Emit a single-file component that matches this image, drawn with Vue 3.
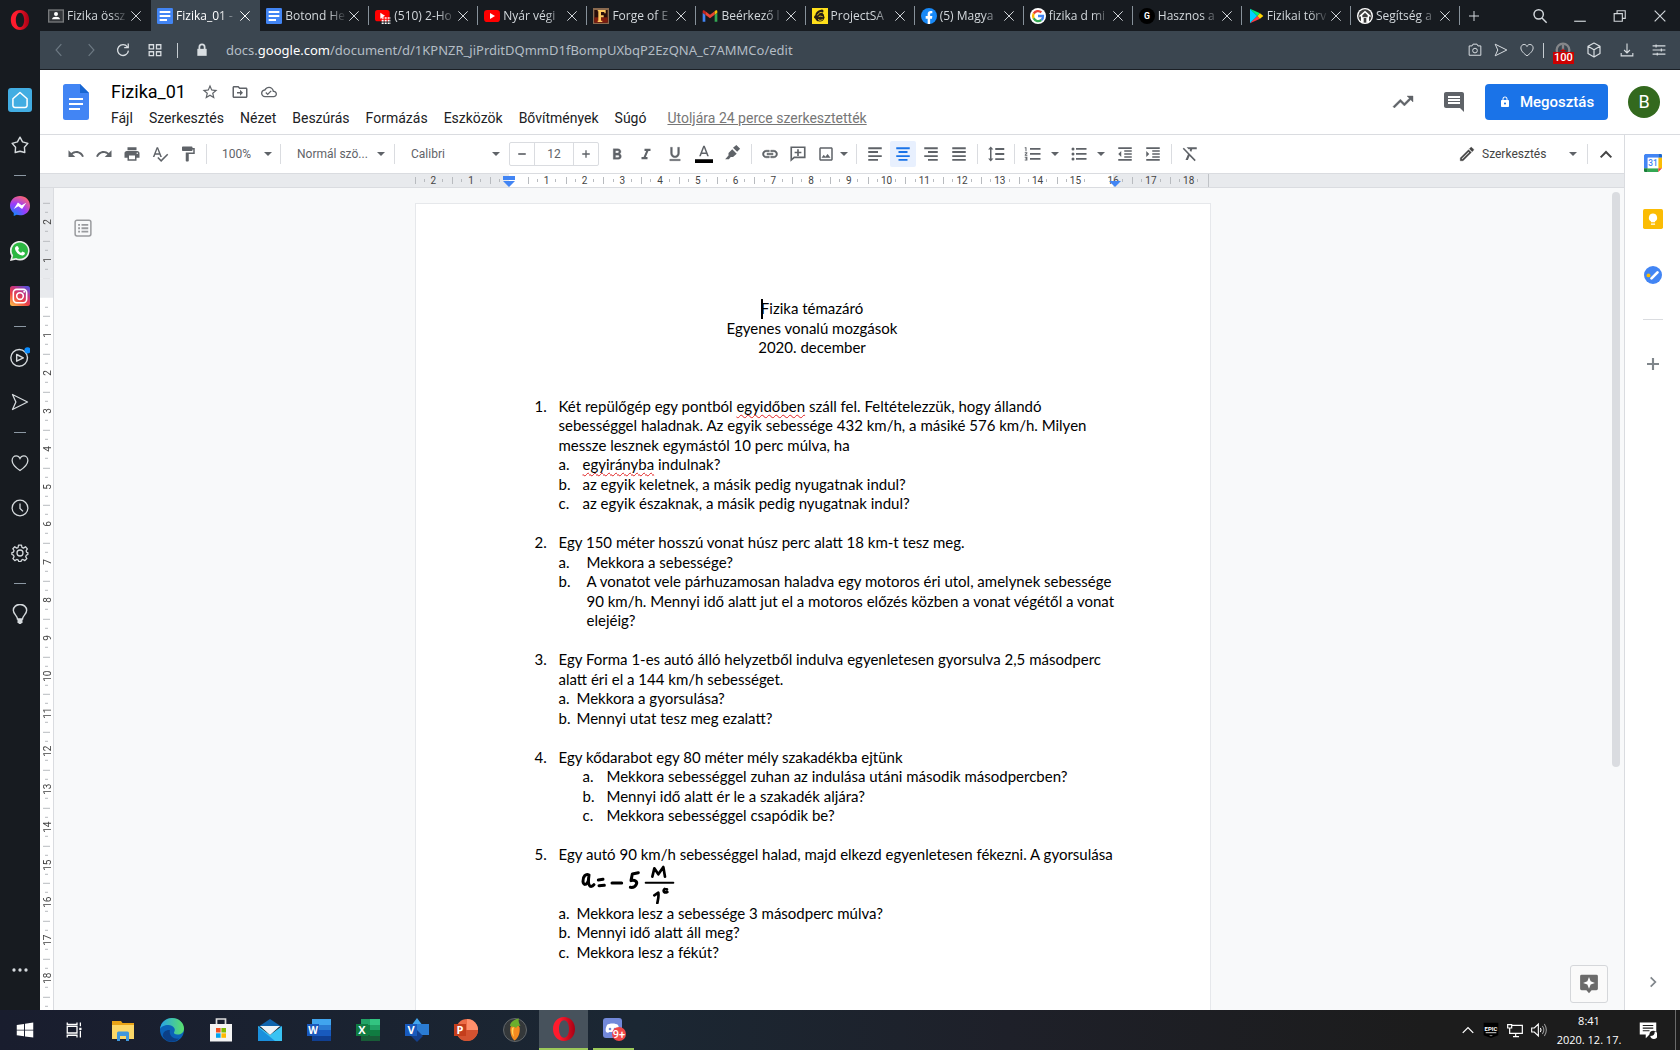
<script setup>
import { h, ref } from 'vue'

const glyphs = {
  // document toolbar
  undo: '<path d="M12.5 8c-2.65 0-5.05.99-6.9 2.6L2 7v9h9l-3.62-3.62c1.39-1.16 3.16-1.88 5.12-1.88 3.54 0 6.55 2.31 7.6 5.5l2.37-.78C21.08 11.03 17.15 8 12.5 8z"/>',
  redo: '<path d="M18.4 10.6C16.55 8.99 14.15 8 11.5 8c-4.65 0-8.58 3.03-9.96 7.22L3.9 16c1.05-3.19 4.05-5.5 7.6-5.5 1.95 0 3.73.72 5.12 1.88L13 16h9V7l-3.6 3.6z"/>',
  print: '<path d="M19 8H5c-1.66 0-3 1.34-3 3v6h4v4h12v-4h4v-6c0-1.66-1.34-3-3-3zm-3 11H8v-5h8v5zm3-7c-.55 0-1-.45-1-1s.45-1 1-1 1 .45 1 1-.45 1-1 1zm-1-9H6v4h12V3z"/>',
  spell: '<path d="M12.45 16h2.09L9.43 3H7.57L2.46 16h2.09l1.12-3h5.64l1.14 3zm-6.02-5L8.5 5.48 10.57 11H6.43zm15.16.59l-8.09 8.09L9.83 16l-1.41 1.41 5.09 5.09L23 13l-1.41-1.41z"/>',
  paint: '<path d="M18 4V3c0-.55-.45-1-1-1H5c-.55 0-1 .45-1 1v4c0 .55.45 1 1 1h12c.55 0 1-.45 1-1V6h1v4H9v11c0 .55.45 1 1 1h2c.55 0 1-.45 1-1v-9h8V4h-3z"/>',
  bold: '<path d="M15.6 11.79c.97-.67 1.65-1.77 1.65-2.79 0-2.26-1.75-4-4-4H7v14h7.04c2.09 0 3.71-1.7 3.71-3.79 0-1.52-.86-2.82-2.15-3.42zM10 7.5h3c.83 0 1.5.67 1.5 1.5s-.67 1.5-1.5 1.5h-3v-3zm3.5 9H10v-3h3.5c.83 0 1.5.67 1.5 1.5s-.67 1.5-1.5 1.5z" stroke="currentColor" stroke-width=".4"/>',
  italic: '<path d="M10 5v3h2.21l-3.42 8H6v3h8v-3h-2.21l3.42-8H18V5z"/>',
  underline: '<path d="M12 17c3.31 0 6-2.69 6-6V3h-2.5v8c0 1.93-1.57 3.5-3.5 3.5S8.5 12.93 8.5 11V3H6v8c0 3.31 2.69 6 6 6zm-7 2v2h14v-2H5z" stroke="currentColor" stroke-width=".4"/>',
  textColor: '<path d="M11 1L5.5 15h2.25l1.12-3h6.25l1.12 3h2.25L13 1h-2zm-1.38 9L12 3.67 14.38 10H9.62z"/><path fill="#000" d="M-2 19h28v5H-2z"/>',
  marker: '<path d="M16.500 0l5 5-4 4-5.500-5.500zM11 5.500l6 6-5 4.500H9l-2.500 3H1.500l4.500-5v-3.500z"/>',
  link: '<path d="M3.900 12c0-1.710 1.390-3.100 3.100-3.100h4V7H7c-2.760 0-5 2.240-5 5s2.240 5 5 5h4v-1.900H7c-1.710 0-3.100-1.390-3.100-3.100zM8 13h8v-2H8v2zm9-6h-4v1.900h4c1.710 0 3.100 1.390 3.100 3.100s-1.390 3.100-3.100 3.100h-4V17h4c2.760 0 5-2.240 5-5s-2.240-5-5-5z" stroke="currentColor" stroke-width=".7"/>',
  addComment: '<path fill="none" stroke="currentColor" stroke-width="2.200" d="M3 20V3h18v13.500H7zM12 5.500v9M7.500 10h9"/>',
  image: '<path d="M19 5v14H5V5h14m0-2H5c-1.1 0-2 .9-2 2v14c0 1.1.9 2 2 2h14c1.1 0 2-.9 2-2V5c0-1.1-.9-2-2-2zm-4.86 8.86l-3 3.870L9 13.140 6 17h12l-3.860-5.140z"/>',
  alignLeft: '<path d="M3 3h18v2.500H3zM3 8h13v2.500H3zM3 13.500h18V16H3zM3 18.500h13V21H3z"/>',
  alignCenter: '<path d="M3 3h18v2.500H3zM6 8h12v2.500H6zM3 13.500h18V16H3zM6 18.500h12V21H6z"/>',
  alignRight: '<path d="M3 3h18v2.500H3zM8 8h13v2.500H8zM3 13.500h18V16H3zM8 18.500h13V21H8z"/>',
  justify: '<path d="M3 3h18v2.500H3zM3 8h18v2.500H3zM3 13.500h18V16H3zM3 18.500h18V21H3z"/>',
  spacing: '<path d="M6 6h2.500L5 2 1.500 6H4v12H1.500L5 22l3.500-4H6V6zm5-2v2.500h12V4H11zm0 16h12v-2.500H11V20zm0-6.800h12v-2.500H11v2.500z"/>',
  numbered: '<path d="M1 17h2v.7H2v1h1v.7H1v1.200h3.500V15.800H1zM2 8.200h1.300V3H1v1.200h1zM1 11h2L1 13.100v1.100h3.500V13h-2l2-2.100V9.800H1zM8 4v2.300h14V4zM8 19.700h14v-2.300H8zM8 13h14v-2.300H8z"/>',
  bulleted: '<circle cx="4" cy="5.200" r="2"/><circle cx="4" cy="12" r="2"/><circle cx="4" cy="18.600" r="2"/><path d="M8 4v2.300h14V4zM8 19.700h14v-2.300H8zM8 13h14v-2.300H8z"/>',
  outdent: '<path d="M11 17h10v-2H11v2zm-8-5l4 4V8l-4 4zm0 9h18v-2.200H3V21zM3 3v2.200h18V3H3zm8 6h10V7H11v2zm0 4h10v-2H11v2z"/>',
  indent: '<path d="M3 21h18v-2.200H3V21zM3 8v8l4-4-4-4zm8 9h10v-2H11v2zM3 3v2.200h18V3H3zm8 6h10V7H11v2zm0 4h10v-2H11v2z"/>',
  clear: '<path d="M3.800 3.500L2.300 5l7 7.200L6 20h3.200l2.200-5.500 6.800 7 1.500-1.500zM7.500 3l2.600 2.700h2.100l-.6 1.500 2 2 1.400-3.500H21V3z"/>',
  pencil: '<path d="M14.060 9.020l.92.92L5.920 19H5v-.92l9.060-9.060M17.660 3c-.25 0-.51.1-.7.290l-1.830 1.830 3.750 3.750 1.830-1.830c.39-.39.39-1.020 0-1.410l-2.340-2.340c-.2-.2-.45-.29-.71-.29zm-3.600 3.190L3 17.250V21h3.750L17.810 9.940l-3.750-3.750z" stroke="currentColor" stroke-width=".5"/>',
  chevronUp: '<path fill="none" stroke="currentColor" stroke-width="3" d="M4 17l8-8 8 8"/>',
  chevronRight: '<path fill="none" stroke="currentColor" stroke-width="3" d="M8 4l8 8-8 8"/>',
  minus: '<path d="M3 10h18v4H3z"/>',
  plus: '<path d="M3 10.400h7.400V3h3.200v7.400H21v3.200h-7.400V21h-3.200v-7.400H3z"/>',
  // document header
  star: '<path d="M22 9.240l-7.190-.62L12 2 9.190 8.630 2 9.240l5.460 4.730L5.820 21 12 17.270 18.180 21l-1.630-7.030L22 9.240zM12 15.400l-3.760 2.270 1-4.280-3.320-2.880 4.380-.38L12 6.100l1.710 4.040 4.380.38-3.320 2.880 1 4.280L12 15.400z"/>',
  folder: '<path d="M20 6h-8l-2-2H4c-1.100 0-2 .9-2 2v12c0 1.100.9 2 2 2h16c1.100 0 2-.9 2-2V8c0-1.100-.9-2-2-2zm0 12H4V6h5.170l2 2H20v10zm-8-1l4-4-4-4v3H8v2h4v3z"/>',
  cloud: '<path d="M19.350 10.040C18.670 6.590 15.640 4 12 4 9.110 4 6.600 5.640 5.350 8.040 2.340 8.360 0 10.910 0 14c0 3.310 2.690 6 6 6h13c2.760 0 5-2.240 5-5 0-2.640-2.050-4.780-4.650-4.960zM19 18H6c-2.210 0-4-1.790-4-4 0-2.050 1.530-3.760 3.560-3.970l1.070-.11.5-.95C8.080 7.140 9.940 6 12 6c2.620 0 4.880 1.860 5.390 4.430l.3 1.500 1.530.11c1.560.1 2.780 1.410 2.780 2.960 0 1.650-1.350 3-3 3zm-9-3.820l-2.090-2.090L6.500 13.500 10 17l6.010-6.010-1.410-1.410z"/>',
  trend: '<path d="M16 6l2.290 2.290-4.880 4.880-4-4L2 16.590 3.410 18l6-6 4 4 6.300-6.290L22 12V6z" stroke="currentColor" stroke-width=".4"/>',
  comments: '<path d="M22 4c0-1.100-.9-2-2-2H4c-1.100 0-2 .9-2 2v12c0 1.100.9 2 2 2h14l4 4zM18 14H6v-2h12v2zm0-3H6V9h12v2zm0-3H6V6h12v2z"/>',
  lock: '<path d="M18 8h-1V6c0-2.760-2.240-5-5-5S7 3.240 7 6v2H6c-1.100 0-2 .9-2 2v10c0 1.100.9 2 2 2h12c1.100 0 2-.9 2-2V10c0-1.100-.9-2-2-2zm-6 9c-1.100 0-2-.9-2-2s.9-2 2-2 2 .9 2 2-.9 2-2 2zm3.100-9H8.900V6c0-1.710 1.390-3.100 3.100-3.100 1.710 0 3.100 1.390 3.100 3.100v2z"/>',
  outline: '<path fill="none" stroke="currentColor" stroke-width="2" d="M4 1.500h16A2.500 2.500 0 0 1 22.500 4v16a2.500 2.500 0 0 1-2.500 2.500H4A2.500 2.500 0 0 1 1.500 20V4A2.500 2.500 0 0 1 4 1.500z"/><path d="M5.500 6.500h2.500V9H5.500zM10 6.500h9V9h-9zM5.500 11h2.500v2.500H5.500zM10 11h9v2.500h-9zM5.500 15.500h2.500V18H5.500zM10 15.500h9V18h-9z"/>',
  explore: '<path d="M2 1h20a2 2 0 0 1 2 2v17a2 2 0 0 1-2 2h-6.500L12 26l-3.500-4H2a2 2 0 0 1-2-2V3a2 2 0 0 1 2-2z"/><path fill="#fff" d="M12 4l2.200 5.800L20 12l-5.800 2.200L12 20l-2.200-5.800L4 12l5.800-2.200z"/>',
  // browser chrome
  close: '<path fill="none" stroke="currentColor" stroke-width="1.700" d="M4 4l16 16M20 4L4 20"/>',
  add: '<path fill="none" stroke="currentColor" stroke-width="2" d="M12 2v20M2 12h20"/>',
  search: '<g fill="none" stroke="currentColor" stroke-width="2.200"><circle cx="10" cy="9.500" r="7"/><path d="M15 15l7 7"/></g>',
  minimize: '<path fill="none" stroke="currentColor" stroke-width="2" d="M2 21h20"/>',
  restore: '<path fill="none" stroke="currentColor" stroke-width="1.900" d="M2 8h14v13H2zM7 8V3h14v13h-5"/>',
  back: '<path fill="none" stroke="currentColor" stroke-width="2" d="M16 2L7 12l9 10"/>',
  forward: '<path fill="none" stroke="currentColor" stroke-width="2" d="M8 2l9 10-9 10"/>',
  reload: '<path fill="none" stroke="currentColor" stroke-width="2.200" d="M19.500 6.500A9.300 9.300 0 1 0 21.300 13M21 1v7h-7"/>',
  speedDial: '<path fill="none" stroke="currentColor" stroke-width="2.200" d="M2 3h7.500v7H2zM14.500 3H22v7h-7.500zM2 15h7.500v6.500H2zM14.500 15H22v6.500h-7.500z"/>',
  siteLock: '<path d="M4 10h16v12H4z"/><path fill="none" stroke="currentColor" stroke-width="3" d="M7.500 11V7a4.500 4.500 0 0 1 9 0v4"/>',
  camera: '<g fill="none" stroke="currentColor" stroke-width="1.700"><path d="M2 5h5l1.500-3h7L17 5h5v16H2z"/><circle cx="12" cy="13" r="4"/></g>',
  send: '<path fill="none" stroke="currentColor" stroke-width="1.700" stroke-linejoin="round" d="M2 2l20 10L2 22l4.500-10z"/>',
  heart: '<path fill="none" stroke="currentColor" stroke-width="1.700" d="M12 22C7 18.500 1.500 13.500 1.500 8.500 1.500 5 4 2.500 7 2.500c2.200 0 4 1.200 5 3.500 1-2.300 2.800-3.500 5-3.500 3 0 5.500 2.500 5.500 6 0 5-5.500 10-10.500 13.500z"/>',
  blocker: '<g fill="none" stroke="#85878a" stroke-width="3.500"><circle cx="12" cy="12" r="9.500"/><path d="M12 4v10"/></g><path stroke="#c60000" stroke-width="2" d="M8 13h8M12 10v6"/>',
  cube: '<path fill="none" stroke="currentColor" stroke-width="1.800" stroke-linejoin="round" d="M12 1.500l9 4.800v11L12 22.500l-9-5.200v-11zM3 6.500l9 5 9-5M12 11.500v11"/>',
  download: '<path fill="none" stroke="currentColor" stroke-width="1.900" d="M12 1v16M7 12l5 5 5-5M2 17v5h20v-5"/>',
  sliders: '<path fill="none" stroke="currentColor" stroke-width="1.900" d="M1 5h22M1 12h22M1 19h22M7 2.500v5M16 9.500v5M9 16.500v5"/>',
  home: '<path fill="none" stroke="currentColor" stroke-width="1.800" stroke-linejoin="round" d="M12 3l8.500 7.500v8A2.500 2.500 0 0 1 18 21H6a2.500 2.500 0 0 1-2.500-2.500v-8z"/>',
  pinStar: '<path fill="none" stroke="currentColor" stroke-width="1.900" stroke-linejoin="round" d="M12 1.500l3.400 6.300 7.100 2-4.600 5.200.5 7-6.400-1.700L5.600 22l.5-7L1.500 9.800l7.100-2z"/>',
  player: '<g fill="none" stroke="currentColor" stroke-width="1.700" stroke-linejoin="round"><circle cx="11" cy="13" r="10"/><path d="M8 9l8 4-8 4z"/></g><circle cx="21" cy="4" r="3.700" fill="#0a8dff"/>',
  clock: '<g fill="none" stroke="currentColor" stroke-width="1.700"><circle cx="12" cy="12" r="10.500"/><path d="M12 6v6.500l4 4"/></g>',
  gear: '<g fill="none" stroke="currentColor" stroke-width="1.700" stroke-linejoin="round"><path d="M10 1.500h4l.6 3.100 2 .9 2.700-1.800 2.500 2.800-1.700 2.600.8 2 1.600.4v2.500l-2 .8-.9 2.200 1.500 2.500-2.600 2.600-2.600-1.500-1.900.8-.7 2.100h-2.900l-.7-2.100-2-.8-2.600 1.500-2.500-2.600 1.500-2.500-.9-2.200-2-.8v-2.500l2-.6.8-2L2.500 6.300 5 3.700l2.700 1.800 1.800-.9z"/><circle cx="12" cy="12" r="4"/></g>',
  bulb: '<path fill="none" stroke="currentColor" stroke-width="1.700" d="M9 18c0-4-5-5.500-5-10.500a8 7 0 0 1 16 0C20 12.500 15 14 15 18z"/><path d="M9 18h6v4l-2 2h-2l-2-2z"/>',
  dots: '<circle cx="3" cy="12" r="2.500"/><circle cx="12" cy="12" r="2.500"/><circle cx="21" cy="12" r="2.500"/>',
  opera: '<defs><linearGradient id="operaRing"><stop offset=".3" stop-color="#ff1b2d"/><stop offset="1" stop-color="#a70014"/></linearGradient></defs><path fill="url(#operaRing)" fill-rule="evenodd" d="M12 0c6.500 0 11 5.200 11 12s-4.500 12-11 12S1 18.800 1 12 5.500 0 12 0zm0 3.300c-3 0-5 3.900-5 8.700s2 8.700 5 8.700 5-3.900 5-8.700-2-8.700-5-8.700z"/>',
  messenger: '<defs><radialGradient id="msgFill" cx=".2" cy="1" r="1.100"><stop offset="0" stop-color="#0a8dff"/><stop offset=".55" stop-color="#9a3bfc"/><stop offset="1" stop-color="#ff6670"/></radialGradient></defs><path fill="url(#msgFill)" d="M12 0c6.700 0 12 5 12 11.600s-5.300 11.600-12 11.600c-1.500 0-2.700-.2-4-.6L4.500 24v-3.600A11.500 11.500 0 0 1 0 11.600C0 5 5.300 0 12 0z"/><path fill="#fff" d="M4.500 15.500l5-7.700 4.500 3.400 5.500-3.200-5 7.700-4.500-3.400z"/>',
  whatsapp: '<path fill="#eee" d="M0 24l1.700-6A11.800 11.800 0 1 1 7 22.500z"/><path fill="#2cb742" d="M2.800 21.200l1-4a9.800 9.800 0 1 1 3.600 3.100z"/><path fill="#fff" d="M7.500 6.200h2l1.300 3-1 1.500c.8 1.700 2 2.800 3.700 3.500l1.400-1.500 3 1.400c.2 2-1.500 3.300-3.200 3.300-4.200-.4-8.300-4.600-8.700-8.500 0-1.200.6-2.200 1.500-2.700z"/>',
  instagram: '<defs><linearGradient id="igFill" x1=".1" y1="1" x2=".8" y2="0"><stop offset="0" stop-color="#fdb94a"/><stop offset=".4" stop-color="#ee4444"/><stop offset=".7" stop-color="#c13584"/><stop offset="1" stop-color="#5b51d8"/></linearGradient></defs><rect width="24" height="24" rx="3" fill="url(#igFill)"/><g fill="none" stroke="#fff" stroke-width="1.900"><rect x="4" y="4" width="16" height="16" rx="4"/><circle cx="12" cy="12" r="4"/></g><circle cx="17" cy="7" r="1.200" fill="#fff"/>',
  // tab favicons
  classroom: '<path fill="#77797b" d="M0 2h24v20H0z"/><path fill="#33363a" d="M2 4h20v16H2z"/><circle cx="12" cy="9" r="3" fill="#fff"/><path fill="#fff" d="M6 17c0-3 3-4 6-4s6 1 6 4z"/>',
  docsTab: '<rect width="24" height="24" rx="2" fill="#4285f4"/><path fill="#fff" d="M4 4.500h16v3H4zM4 10.500h16v3H4zM4 16.500h11v3H4z"/>',
  ytPlaying: '<rect y="3" width="22" height="17" rx="4" fill="#f00"/><path fill="#fff" d="M8 7l7 4.500L8 16z"/><path stroke="#fff" stroke-width="2.500" stroke-dasharray="3 1.500" d="M10 15h14M10 19h14M10 23h14"/>',
  youtube: '<rect x="0" y="3" width="24" height="18" rx="5" fill="#f00"/><path fill="#fff" d="M9 7.500l7.500 4.500L9 16.500z"/>',
  forge: '<path fill="#8a6a4f" d="M0 0h24v24H0z"/><path fill="#2a0d0a" d="M2 3h20v19H2z"/><path fill="#801c0e" d="M2 14h20v8H2z"/><path fill="#ffc860" d="M7 3h12v5h-2V6h-5v5h4v3h-4v5h2v2H7v-2h1V5H7z"/>',
  gmail: '<path fill="#4285f4" d="M1 20.500h4V10L1 7z"/><path fill="#34a853" d="M19 20.500h4V7l-4 3z"/><path fill="#ea4335" d="M5 10V5l7 5 7-5v5l-7 5.500z"/><path fill="#c5221f" d="M1 7V5c0-2 2-2.500 4 0v5z"/><path fill="#fbbc04" d="M23 7V5c0-2-2-2.500-4 0v5z"/>',
  mailchimp: '<path fill="#ffe01b" d="M0 0h24v24H0z"/><path fill="#241c15" d="M12 3c4-2 6 0 5 3l-1 2c3 2 1 4 3 6-1 5-5 7-9 6-3 0-4-2-5-4-3-1-2-4 0-5 0-4 3-7 7-8z"/><path fill="none" stroke="#ffe01b" stroke-width="1.300" d="M8 11c2-4 5-5 8-4M10 13c3-2 4 0 6 0M9 17c2 2 4 2 7 0"/>',
  facebook: '<circle cx="12" cy="12" r="12" fill="#1889f7"/><path fill="#fff" d="M10 24v-8H7v-4h3V9c0-3 2-4.600 4.500-4.600l2.500.2v3.300h-1.500c-1.300 0-1.800.7-1.800 1.600V12H17l-.5 4h-2.800v8z"/>',
  google: '<circle cx="12" cy="12" r="12" fill="#fff"/><g fill="none" stroke-width="3.500"><path stroke="#ea4335" d="M17 6.500A7.500 7.500 0 0 0 5.500 8.500"/><path stroke="#fbbc04" d="M5.500 8.500a7.500 7.500 0 0 0 0 7"/><path stroke="#34a853" d="M5.500 15.500A7.500 7.500 0 0 0 17 18"/><path stroke="#4285f4" d="M17 18c2-1.600 2.800-3.500 2.500-6H12"/></g>',
  letterG: '<circle cx="12" cy="12" r="12" fill="#000"/><text x="12" y="16.500" text-anchor="middle" font-family="Roboto, sans-serif" font-weight="700" font-size="13" fill="#fff">G</text>',
  play: '<path fill="#00d0ff" d="M3 1v22l11-11z"/><path fill="#00f076" d="M3 1l11 11 4-4z"/><path fill="#ff3a44" d="M3 23l11-11 4 4z"/><path fill="#ffd500" d="M14 12l4-4 5 4-5 4z"/>',
  house: '<circle cx="12" cy="12" r="12" fill="#fff"/><circle cx="12" cy="12" r="10" fill="#3d3d3d"/><path fill="#fff" d="M12 4l9 8-1.500 1.500L18 12v10h-4v-7h-4v7H6V12l-1.500 1.500L3 12z"/><path fill="#3d3d3d" d="M12 7l4 4v3H8v-3z"/>',
  // side panel
  calendar: '<path fill="#4285f4" d="M1.500 0H19v5H5v14H0V1.500z"/><path fill="#1967d2" d="M19 0h3.500A1.500 1.500 0 0 1 24 1.500V5h-5z"/><path fill="#fbbc04" d="M19 5h5v14h-5z"/><path fill="#34a853" d="M5 19h14v5H5z"/><path fill="#188038" d="M0 19h5v5H1.500A1.500 1.500 0 0 1 0 22.500z"/><path fill="#ea4335" d="M19 19h5l-5 5z"/><path fill="#fff" d="M5 5h14v14H5z"/><text x="12" y="16" text-anchor="middle" font-family="Roboto, sans-serif" font-weight="500" font-size="11" fill="#4285f4">31</text>',
  keep: '<rect width="24" height="24" rx="2" fill="#fbbc04"/><path fill="#fff" d="M12 5.500a5 5 0 0 1 2.500 9.300V16h-5v-1.200A5 5 0 0 1 12 5.500zM9.500 17.300h5v1.700h-5z"/>',
  tasks: '<circle cx="12" cy="12" r="12" fill="#4285f4"/><path stroke="#fff" stroke-width="3.600" stroke-linecap="round" d="M10 16.500l8-8"/><circle cx="6" cy="12.500" r="2.600" fill="#fbbc04"/>',
  // taskbar
  windows: '<path d="M1 5.200l9.700-1.300v7.600H1zM12 3.700L23 2v9.500H12zM1 12.700h9.700v7.600L1 19zM12 12.700h11V22l-11-1.500z"/>',
  taskView: '<path fill="none" stroke="currentColor" stroke-width="1.700" d="M3 7h13v9H3zM3 2v2.500h13V2M3 22v-3h13v3M20.500 2v5M20.500 13v9"/><path d="M19 9h3v3h-3z"/>',
  explorer: '<path fill="#e8a317" d="M1 3h9l1.500 2H23v4H1z"/><path fill="#fbd768" d="M1 7h22v14H1z"/><path fill="#3f97dc" d="M6 23v-8a1.500 1.500 0 0 1 1.500-1.500h9A1.500 1.500 0 0 1 18 15v8h-3v-5H9v5z"/>',
  edge: '<defs><linearGradient id="edgeTop"><stop offset="0" stop-color="#27a3e8"/><stop offset="1" stop-color="#5be06a"/></linearGradient></defs><circle cx="12" cy="12" r="12" fill="#0b62b8"/><path fill="url(#edgeTop)" d="M0 11C1 4 6 0 12 0c7 0 12 5 12 10.500 0 4-3 6-6.500 6-3 0-3.800-1.200-3.500-2.300C16.500 11 13 7 8.500 7 4 7 1 9 0 11z"/><path fill="#0c3f86" d="M10 12c-1.500 5 3 9.500 9 8.500-5 5-13 4-16-2-1-4 3-7 7-6.500z"/>',
  store: '<path fill="none" stroke="#ddd" stroke-width="1.700" d="M7.500 8V1h9v7"/><path fill="#f4f4f4" d="M1 6h22v17.500H1z"/><path fill="#f25022" d="M7 10h4.600v4.500H7z"/><path fill="#7fba00" d="M12.400 10H17v4.500h-4.600z"/><path fill="#00a4ef" d="M7 15.300h4.600v4.500H7z"/><path fill="#ffb900" d="M12.400 15.300H17v4.500h-4.600z"/>',
  mail: '<path fill="#0f64ad" d="M0 9l12-8 12 8z"/><path fill="#39c3f3" d="M0 8v15h24V8l-12 9z"/><path fill="#eef3f7" d="M2 8h20l-10 9z"/><path fill="#1a90dd" d="M0 23V9l17 14z"/>',
  word: '<path fill="#41a5ee" d="M5 1h19v6H5z"/><path fill="#2b7cd3" d="M5 7h19v5H5z"/><path fill="#185abd" d="M5 12h19v6H5z"/><path fill="#103f91" d="M5 18h19v5H5z"/><path fill="#1a58bb" d="M0 6h12v12H0z"/><text x="6" y="16" text-anchor="middle" font-family="Open Sans, sans-serif" font-weight="700" font-size="10" fill="#fff">W</text>',
  excel: '<path fill="#21a366" d="M5 1h19v22H5z"/><path fill="#33c481" d="M14 1h10v6H14z"/><path fill="#185c37" d="M5 17h19v6H5z"/><path fill="#107c41" d="M5 7h9v10H5zM14 12h10v6H14zM0 6h12v12H0z"/><text x="6" y="16" text-anchor="middle" font-family="Open Sans, sans-serif" font-weight="700" font-size="11" fill="#fff">X</text>',
  visio: '<path fill="#41a5ee" d="M12 0l6 8-6 6-6-6z"/><path fill="#2b7cd3" d="M12 6h12v11H12z"/><path fill="#133f8c" d="M12 12l6 6-6 6-6-6z"/><path fill="#185abd" d="M0 6h12v12H0z"/><text x="6" y="16" text-anchor="middle" font-family="Open Sans, sans-serif" font-weight="700" font-size="11" fill="#fff">V</text>',
  powerpoint: '<circle cx="13" cy="12" r="11" fill="#ed6c47"/><path fill="#ff8f6b" d="M13 1a11 11 0 0 1 11 11H13z"/><path fill="#d35230" d="M2 12h22a11 11 0 0 1-22 0z"/><path fill="#c43e1c" d="M0 6h12v12H0z"/><text x="6" y="16" text-anchor="middle" font-family="Open Sans, sans-serif" font-weight="700" font-size="11" fill="#fff">P</text>',
  fruity: '<circle cx="12" cy="12" r="11.500" fill="#34383a" stroke="#62676b"/><path fill="#f58a1f" d="M7.500 9c2-3 7-3 9 0 1 5-1 11-5 13.500-3-2-5-8.500-4-13.500z"/><path fill="#ffd25a" d="M9 10c-1 3 0 7 2 9-1-4-1-6 0-10z"/><path fill="#6cae2c" d="M7 8c0-4 5-7 9-7.500-1 2 0 5 1.500 7.500-3-1-3.500 1-4.500 2-2-2-4-1-6-2z"/>',
  discord: '<rect x="1" y="1" width="19" height="20" rx="3" fill="#7289da"/><path fill="#fff" d="M5 8c2-2 9-2 11 0 1 2 2 5 1 7-1 1-3 1-3 0h-7c0 1-2 1-3 0-1-2 0-5 1-7z"/><circle cx="8" cy="12" r="1.300" fill="#7289da"/><circle cx="13" cy="12" r="1.300" fill="#7289da"/><circle cx="17" cy="17" r="7" fill="#f04747"/><text x="17" y="21" text-anchor="middle" font-family="Roboto, sans-serif" font-weight="500" font-size="11" fill="#fff">9+</text>',
  trayUp: '<path fill="none" stroke="currentColor" stroke-width="2.200" d="M3 17l9-9 9 9"/>',
  epic: '<path fill="#000" d="M1 1h22v19l-11 4-11-4z"/><text x="12" y="13" text-anchor="middle" font-family="Roboto, sans-serif" font-weight="700" font-size="9" fill="#fff">EPIC</text><path fill="#aaa" d="M4 15h16v2H4zM9 20h6l-3 1.500z"/>',
  network: '<path fill="none" stroke="currentColor" stroke-width="1.800" d="M7 5h16v12H4V10M13 17v5M9 22h9M1 4h6v5H1zM4 9v3"/>',
  volume: '<path fill="none" stroke="currentColor" stroke-width="1.700" d="M1 9h4l6-6v18l-6-6H1zM14 9c1.500 2 1.500 4 0 6"/><path fill="none" stroke="#999" stroke-width="1.600" d="M17 6c3 4 3 8 0 12M20 3c4 6 4 12 0 18"/>',
  notice: '<path fill="currentColor" d="M1 2h22v16h-9l-5 5v-5H1z"/><path stroke="#1d1d1d" stroke-width="1.500" d="M5 6h14M5 9.500h14M5 13h9"/><circle cx="19" cy="18" r="5" fill="#1d1d1d"/><path fill="currentColor" d="M21 14a5 5 0 1 1-6 6c4 0 6-2 6-6z"/>',
}

const Icon = (props) =>
  h('svg', {
    viewBox: props.box || '0 0 24 24',
    width: props.size || 18,
    height: props.tall || props.size || 18,
    fill: 'currentColor',
    'aria-hidden': 'true',
    innerHTML: glyphs[props.name],
  })
Icon.props = ['name', 'size', 'tall', 'box']

const tabs = [
  { icon: 'classroom', title: 'Fizika össz' },
  { icon: 'docsTab', title: 'Fizika_01 -', active: true },
  { icon: 'docsTab', title: 'Botond He' },
  { icon: 'ytPlaying', title: '(510) 2-Ho' },
  { icon: 'youtube', title: 'Nyár végi' },
  { icon: 'forge', title: 'Forge of E' },
  { icon: 'gmail', title: 'Beérkező l' },
  { icon: 'mailchimp', title: 'ProjectSA' },
  { icon: 'facebook', title: '(5) Magya' },
  { icon: 'google', title: 'fizika d mi' },
  { icon: 'letterG', title: 'Hasznos a' },
  { icon: 'play', title: 'Fizikai törv' },
  { icon: 'house', title: 'Segítség a' },
]

const rail = [
  { icon: 'pinStar' }, null,
  { icon: 'messenger', size: 20 }, { icon: 'whatsapp', size: 20 }, { icon: 'instagram', size: 20 }, null,
  { icon: 'player', size: 20 }, { icon: 'send' }, null,
  { icon: 'heart' }, { icon: 'clock' }, { icon: 'gear' }, null,
  { icon: 'bulb', size: 20 },
]

const menus = ['Fájl', 'Szerkesztés', 'Nézet', 'Beszúrás', 'Formázás', 'Eszközök', 'Bővítmények', 'Súgó']
const fontSize = ref('12')
const title = ref('Fizika_01')

const rulerMarks = Array.from({ length: 21 }, (_, i) => Math.abs(i - 2) || '')
const sideMarks = Array.from({ length: 22 }, (_, i) => Math.abs(i - 2) || '')

const questions = [
  {
    lines: [
      ['Két repülőgép egy pontból ', { bad: 'egyidőben' }, ' száll fel. Feltételezzük, hogy állandó'],
      ['sebességgel haladnak. Az egyik sebessége 432 km/h, a másiké 576 km/h. Milyen'],
      ['messze lesznek egymástól 10 perc múlva, ha'],
    ],
    kind: 'normal',
    subs: [
      [[{ bad: 'egyirányba' }, ' indulnak?']],
      [['az egyik keletnek, a másik pedig nyugatnak indul?']],
      [['az egyik északnak, a másik pedig nyugatnak indul?']],
    ],
  },
  {
    lines: [['Egy 150 méter hosszú vonat húsz perc alatt 18 km-t tesz meg.']],
    kind: 'wide',
    subs: [
      [['Mekkora a sebessége?']],
      [
        ['A vonatot vele párhuzamosan haladva egy motoros éri utol, amelynek sebessége'],
        ['90 km/h. Mennyi idő alatt jut el a motoros előzés közben a vonat végétől a vonat'],
        ['elejéig?'],
      ],
    ],
  },
  {
    lines: [
      ['Egy Forma 1-es autó álló helyzetből indulva egyenletesen gyorsulva 2,5 másodperc'],
      ['alatt éri el a 144 km/h sebességet.'],
    ],
    kind: 'tight',
    subs: [[['Mekkora a gyorsulása?']], [['Mennyi utat tesz meg ezalatt?']]],
  },
  {
    lines: [['Egy kődarabot egy 80 méter mély szakadékba ejtünk']],
    kind: 'inset',
    subs: [
      [['Mekkora sebességgel zuhan az indulása utáni második másodpercben?']],
      [['Mennyi idő alatt ér le a szakadék aljára?']],
      [['Mekkora sebességgel csapódik be?']],
    ],
  },
  {
    lines: [['Egy autó 90 km/h sebességgel halad, majd elkezd egyenletesen fékezni. A gyorsulása']],
    formula: true,
    kind: 'tight',
    subs: [[['Mekkora lesz a sebessége 3 másodperc múlva?']], [['Mennyi idő alatt áll meg?']], [['Mekkora lesz a fékút?']]],
  },
]

const apps = ['windows', 'taskView', 'explorer', 'edge', 'store', 'mail', 'word', 'excel', 'visio', 'powerpoint', 'fruity', 'opera', 'discord']
</script>

<template>
  <div class="desktop">
    <div class="window">
      <nav class="rail" aria-label="Oldalsáv">
        <button class="rail-logo" aria-label="Opera"><Icon name="opera" :size="20" /></button>
        <button class="rail-home" aria-label="Kezdőlap"><Icon name="home" :size="20" /></button>
        <template v-for="(item, i) in rail" :key="i">
          <button v-if="item" class="rail-item" :aria-label="item.icon"><Icon :name="item.icon" :size="item.size" /></button>
          <span v-else class="rail-dash"></span>
        </template>
        <button class="rail-more" aria-label="Továbbiak"><Icon name="dots" :size="16" /></button>
      </nav>

      <div class="browser">
        <header class="tab-bar">
          <div class="tabs">
            <div v-for="(tab, i) in tabs" :key="i" class="tab" :class="{ active: tab.active }">
              <Icon :name="tab.icon" :size="16" />
              <button class="tab-title">{{ tab.title }}</button>
              <button class="tab-close" aria-label="Bezárás"><Icon name="close" :size="14" /></button>
            </div>
          </div>
          <button class="new-tab" aria-label="Új lap"><Icon name="add" :size="12" /></button>
          <div class="window-buttons">
            <button aria-label="Keresés"><Icon name="search" :size="16" /></button>
            <button aria-label="Kis méret"><Icon name="minimize" :size="14" /></button>
            <button aria-label="Előző méret"><Icon name="restore" :size="14" /></button>
            <button aria-label="Ablak bezárása"><Icon name="close" :size="16" /></button>
          </div>
        </header>

        <div class="address-bar">
          <button class="dim" aria-label="Vissza"><Icon name="back" :size="14" /></button>
          <button class="dim" aria-label="Előre"><Icon name="forward" :size="14" /></button>
          <button aria-label="Frissítés"><Icon name="reload" :size="14" /></button>
          <button aria-label="Gyorstárcsázó"><Icon name="speedDial" :size="14" /></button>
          <span class="bar-line"></span>
          <Icon class="site-lock" name="siteLock" :size="14" />
          <div class="url">docs.<b>google.com</b>/document/d/1KPNZR_jiPrditDQmmD1fBompUXbqP2EzQNA_c7AMMCo/edit</div>
          <div class="bar-tools">
            <button aria-label="Képernyőkép"><Icon name="camera" :size="14" /></button>
            <button aria-label="Küldés"><Icon name="send" :size="14" /></button>
            <button aria-label="Könyvjelző"><Icon name="heart" :size="14" /></button>
          </div>
          <span class="bar-line"></span>
          <div class="bar-extras">
            <button class="blocker" aria-label="Blokkoló"><Icon name="blocker" :size="16" /><span class="badge">100</span></button>
            <button aria-label="Bővítmények"><Icon name="cube" :size="16" /></button>
            <button aria-label="Letöltések"><Icon name="download" :size="14" /></button>
            <button aria-label="Beállítás"><Icon name="sliders" :size="14" /></button>
          </div>
        </div>

        <header class="doc-header">
          <a class="doc-logo" href="#" aria-label="Dokumentumok">
            <svg viewBox="0 0 26 36" width="26" height="36" aria-hidden="true">
              <path fill="#4285f4" d="M2.500 0H17l9 9v24.500a2.500 2.500 0 0 1-2.500 2.500h-21A2.500 2.500 0 0 1 0 33.500v-31A2.500 2.500 0 0 1 2.500 0z" />
              <path fill="#1967d2" d="M17 0l9 9h-9z" />
              <path fill="#fff" d="M6 14h14v2H6zM6 19h14v2H6zM6 24h11v2H6z" />
            </svg>
          </a>
          <div class="doc-head-main">
            <div class="title-row">
              <input v-model="title" class="doc-title" aria-label="Dokumentum címe" />
              <button aria-label="Csillagozás"><Icon name="star" :size="18" /></button>
              <button aria-label="Áthelyezés"><Icon name="folder" :size="18" /></button>
              <button aria-label="Mentés állapota"><Icon name="cloud" :size="16" /></button>
            </div>
            <div class="menu-row">
              <button v-for="m in menus" :key="m">{{ m }}</button>
              <a href="#" class="last-edit">Utoljára 24 perce szerkesztették</a>
            </div>
          </div>
          <div class="doc-actions">
            <button class="act" aria-label="Aktivitás"><Icon name="trend" :size="24" /></button>
            <button class="act" aria-label="Megjegyzések"><Icon name="comments" :size="24" /></button>
            <button class="share"><Icon name="lock" :size="12" />Megosztás</button>
            <button class="avatar" aria-label="Fiók">B</button>
          </div>
        </header>

        <div class="workspace">
          <main class="editor">
            <div class="toolbar">
              <button v-for="n in ['undo', 'redo', 'print', 'spell', 'paint']" :key="n" class="tool" :aria-label="n"><Icon :name="n" /></button>
              <span class="sep"></span>
              <label class="pick zoom"><select aria-label="Nagyítás"><option>100%</option></select><i class="caret"></i></label>
              <span class="sep"></span>
              <label class="pick style"><select aria-label="Stílus"><option>Normál szö...</option></select><i class="caret"></i></label>
              <span class="sep"></span>
              <label class="pick font"><select aria-label="Betűtípus"><option>Calibri</option></select><i class="caret"></i></label>
              <div class="size-box">
                <button aria-label="Kisebb"><Icon name="minus" :size="10" /></button>
                <input v-model="fontSize" aria-label="Betűméret" />
                <button aria-label="Nagyobb"><Icon name="plus" :size="10" /></button>
              </div>
              <div class="text-tools">
                <button v-for="n in ['bold', 'italic', 'underline', 'textColor', 'marker']" :key="n" class="tool" :aria-label="n"><Icon :name="n" /></button>
              </div>
              <span class="sep"></span>
              <button v-for="n in ['link', 'addComment', 'image']" :key="n" class="tool" :aria-label="n"><Icon :name="n" /></button>
              <i class="caret near"></i>
              <span class="sep"></span>
              <button v-for="n in ['alignLeft', 'alignCenter', 'alignRight', 'justify']" :key="n" class="tool" :class="{ on: n === 'alignCenter' }" :aria-label="n"><Icon :name="n" /></button>
              <span class="sep"></span>
              <button class="tool" aria-label="Sorköz"><Icon name="spacing" /></button>
              <span class="sep"></span>
              <button class="tool" aria-label="Számozott lista"><Icon name="numbered" /></button>
              <i class="caret list"></i>
              <button class="tool" aria-label="Felsorolás"><Icon name="bulleted" /></button>
              <i class="caret list"></i>
              <button class="tool" aria-label="Behúzás csökkentése"><Icon name="outdent" /></button>
              <button class="tool" aria-label="Behúzás növelése"><Icon name="indent" /></button>
              <span class="sep"></span>
              <button class="tool" aria-label="Formázás törlése"><Icon name="clear" /></button>
              <div class="mode">
                <Icon name="pencil" :size="18" />
                <label class="pick mode-pick"><select aria-label="Mód"><option>Szerkesztés</option></select><i class="caret"></i></label>
                <span class="sep"></span>
                <button class="tool" aria-label="Menük elrejtése"><Icon name="chevronUp" :size="16" /></button>
              </div>
            </div>

            <div class="ruler-row">
              <div class="ruler">
                <span v-for="(m, i) in rulerMarks" :key="i" class="cell" :class="{ inner: i > 2 && i < 18, first: i === 2, last: i === 18 }">{{ m }}</span>
                <svg class="indent-start" viewBox="0 0 12 11" width="12" height="11" aria-hidden="true"><path fill="#4285f4" d="M0 0h12v4H0zM0 5h12l-6 6z" /></svg>
                <svg class="indent-end" viewBox="0 0 12 6" width="12" height="6" aria-hidden="true"><path fill="#4285f4" d="M0 0h12L6 6z" /></svg>
              </div>
            </div>

            <div class="canvas-row">
              <div class="side-ruler">
                <span v-for="(m, i) in sideMarks" :key="i" class="side-cell" :class="{ margin: i < 2, half: i === 2 }">{{ m }}</span>
              </div>
              <div class="canvas">
                <button class="outline-btn" aria-label="Vázlat"><Icon name="outline" /></button>
                <article class="page">
                  <div class="heading">
                    <p><i class="cursor"></i>Fizika témazáró</p>
                    <p>Egyenes vonalú mozgások</p>
                    <p>2020. december</p>
                  </div>
                  <ol class="questions">
                    <li v-for="(q, qi) in questions" :key="qi">
                      <span class="num">{{ qi + 1 }}.</span>
                      <div>
                        <p v-for="(line, li) in q.lines" :key="li"><template v-for="(part, pi) in line" :key="pi"><u v-if="part.bad">{{ part.bad }}</u><template v-else>{{ part }}</template></template></p>
                        <svg v-if="q.formula" class="formula" viewBox="-36 15 360 117" width="120" height="39" role="img" aria-label="a = -5 m/s²">
                          <g fill="none" stroke="#000" stroke-width="9" stroke-linecap="round" stroke-linejoin="round">
                            <path d="M54 45c-9-5-19 4-18 19 1 13 11 12 16-2l2-17c-3 20-2 31 4 34 5 1 8-1 11-5" />
                            <path d="M82 60l14-2M84 77l16-1M123 69h29M202 38l-18 4-4 20c11-4 20 3 16 11-4 8-12 10-18 9" />
                            <path stroke-width="8" d="M244 50l6-25 12 18 15-22 5 29" />
                            <path stroke-width="6" d="M224 68h83" />
                            <path stroke-width="8" d="M250 106l12-8c2 11-1 22-3 31M281 87c-7 6-1 13 8 9M281 87l7 1" />
                          </g>
                        </svg>
                        <ol class="subs" :class="q.kind">
                          <li v-for="(s, si) in q.subs" :key="si">
                            <span>{{ 'abc'[si] }}.</span>
                            <div>
                              <p v-for="(line, li) in s" :key="li"><template v-for="(part, pi) in line" :key="pi"><u v-if="part.bad">{{ part.bad }}</u><template v-else>{{ part }}</template></template></p>
                            </div>
                          </li>
                        </ol>
                      </div>
                    </li>
                  </ol>
                </article>
                <div class="scroll-thumb"></div>
                <button class="explore" aria-label="Felfedezés"><Icon name="explore" :size="18" :tall="20" box="0 0 24 27" /></button>
              </div>
            </div>
          </main>

          <aside class="panel">
            <button aria-label="Naptár"><Icon name="calendar" :size="18" /></button>
            <button aria-label="Keep"><Icon name="keep" :size="20" /></button>
            <button aria-label="Feladatok"><Icon name="tasks" :size="18" /></button>
            <span class="panel-line"></span>
            <button class="grey" aria-label="Hozzáadás"><Icon name="plus" :size="16" /></button>
            <button class="grey hide" aria-label="Panel elrejtése"><Icon name="chevronRight" :size="14" /></button>
          </aside>
        </div>
      </div>
    </div>

    <footer class="taskbar">
      <button v-for="a in apps" :key="a" class="app" :class="a" :aria-label="a"><Icon :name="a" :size="a === 'windows' || a === 'taskView' ? 18 : 24" /></button>
      <div class="tray">
        <Icon name="trayUp" :size="14" />
        <Icon name="epic" :size="16" />
        <Icon name="network" :size="16" />
        <Icon name="volume" :size="16" />
        <div class="time"><span>8:41</span><span>2020. 12. 17.</span></div>
        <Icon class="notice" name="notice" :size="18" />
        <span class="peek"></span>
      </div>
    </footer>
  </div>
</template>

<style>
body {
  margin: 0;
  background: #f8f9fa;
}
</style>

<style scoped>
.desktop {
  display: flex;
  flex-direction: column;
  height: 100vh;
  font-family: Roboto, "Liberation Sans", sans-serif;
  overflow: hidden;
}
.desktop * {
  box-sizing: border-box;
}
button,
input,
select {
  margin: 0;
  padding: 0;
  border: 0;
  background: none;
  font: inherit;
  color: inherit;
}
button {
  display: inline-flex;
  align-items: center;
  justify-content: center;
}
svg {
  flex: none;
  display: block;
}
.window {
  flex: 1;
  min-height: 0;
  display: flex;
}

/* left rail */
.rail {
  width: 40px;
  flex: none;
  display: flex;
  flex-direction: column;
  align-items: center;
  background: #171b20;
  color: #d5dadd;
}
.rail-logo {
  height: 40px;
  margin-bottom: 48px;
}
.rail-home {
  width: 24px;
  height: 24px;
  margin-bottom: 10px;
  border-radius: 3px;
  background: #42ade2;
  color: #fff;
}
.rail-item {
  width: 40px;
  height: 45px;
}
.rail-dash {
  width: 12px;
  height: 1px;
  margin: 8px 0 7px;
  background: #8c98a3;
}
.rail-more {
  height: 40px;
  margin-top: auto;
  margin-bottom: 20px;
}

/* browser chrome */
.browser {
  flex: 1;
  min-width: 0;
  display: flex;
  flex-direction: column;
}
.tab-bar {
  flex: none;
  height: 31px;
  display: flex;
  background: #171b20;
  color: #d3d8dc;
  font: 12px/31px "Open Sans", "Noto Sans", sans-serif;
}
.tabs {
  flex: 1;
  min-width: 0;
  display: flex;
  padding-left: 2px;
}
.tab {
  flex: 1 1 0;
  min-width: 0;
  display: flex;
  align-items: center;
  padding: 0 7px 0 6px;
  border-right: 1px solid #87919a;
  border-image: linear-gradient(transparent 22%, #87919a 22%, #87919a 78%, transparent 78%) 1;
}
.tab:nth-child(-n + 2) {
  border-image: none;
  border-color: transparent;
}
.tab.active {
  background: #3b4650;
  color: #fff;
}
.tab-title {
  flex: 1;
  min-width: 0;
  justify-content: flex-start;
  margin-left: 3px;
  white-space: nowrap;
  -webkit-mask-image: linear-gradient(90deg, #000 70%, transparent);
  mask-image: linear-gradient(90deg, #000 70%, transparent);
}
.new-tab {
  width: 28px;
}
.window-buttons {
  width: 192px;
  display: flex;
  justify-content: space-between;
  padding: 0 12px 0 44px;
}
.address-bar {
  flex: none;
  height: 39px;
  display: flex;
  align-items: center;
  padding: 0 14px 0 3px;
  border-bottom: 1px solid #1b2026;
  background: #3b4650;
  color: #d9dee2;
}
.address-bar > button {
  width: 32px;
}
.address-bar .dim {
  color: #6d7983;
}
.bar-line {
  width: 1px;
  height: 15px;
  margin-left: 6px;
  background: #c5ccd1;
}
.site-lock {
  margin: 0 17px;
}
.url {
  flex: 1;
  min-width: 0;
  font: 13px/20px "Noto Sans", "Open Sans", sans-serif;
  color: #b4bdc5;
  white-space: nowrap;
  overflow: hidden;
}
.url b {
  font-weight: 400;
  color: #fff;
}
.bar-tools {
  display: flex;
  gap: 12px;
  margin-right: 3px;
}
.bar-extras {
  display: flex;
  gap: 18px;
  margin-left: 11px;
}
.blocker {
  position: relative;
  margin-right: -3px;
}
.badge {
  position: absolute;
  left: -2px;
  top: 10px;
  padding: 0 1px;
  background: #cc0000;
  font: 500 11px/12px Roboto, sans-serif;
  color: #fff;
}

/* document header */
.doc-header {
  flex: none;
  height: 65px;
  display: flex;
  padding: 0 20px 0 22px;
  border-bottom: 1px solid #dadce0;
  background: #fff;
  color: #5f6368;
}
.doc-logo {
  margin: 14px 22px 0 1px;
}
.doc-head-main {
  flex: 1;
  min-width: 0;
}
.title-row {
  display: flex;
  align-items: center;
  gap: 12px;
  height: 28px;
  margin-top: 8px;
}
.doc-title {
  width: 78px;
  font-size: 18px;
  line-height: 24px;
  color: #000;
}
.menu-row {
  display: flex;
  gap: 16px;
  font-size: 14px;
  line-height: 24px;
  color: #202124;
  white-space: nowrap;
}
.last-edit {
  margin-left: 5px;
  color: #777;
}
.doc-actions {
  display: flex;
  align-items: center;
  margin-bottom: 1px;
}
.act {
  width: 24px;
  margin-right: 27px;
}
.act + .act {
  margin-right: 19px;
}
.share {
  gap: 9px;
  width: 123px;
  height: 36px;
  margin-right: 20px;
  border-radius: 4px;
  background: #1a73e8;
  color: #fff;
  font-size: 15px;
  font-weight: 500;
}
.avatar {
  width: 32px;
  height: 32px;
  border-radius: 50%;
  background: #33691e;
  color: #fff;
  font-size: 18px;
}

/* editor */
.workspace {
  flex: 1;
  min-height: 0;
  display: flex;
  background: #fff;
}
.editor {
  flex: 1;
  min-width: 0;
  display: flex;
  flex-direction: column;
}
.toolbar {
  flex: none;
  height: 38px;
  display: flex;
  align-items: center;
  padding-left: 22px;
  font-size: 12px;
  color: #5f6368;
}
.tool {
  flex: none;
  width: 28px;
  height: 26px;
  border-radius: 2px;
}
.tool.on {
  width: 26px;
  margin: 0 1px;
  background: #e8f0fe;
  color: #1a73e8;
}
.text-tools {
  flex: none;
  display: flex;
  gap: 1px;
}
.sep {
  flex: none;
  width: 1px;
  height: 20px;
  margin: 0 4px;
  background: #dadce0;
}
.pick {
  display: flex;
  align-items: center;
  justify-content: space-between;
}
.pick select {
  flex: 1;
  min-width: 0;
  appearance: none;
  outline: 0;
}
.caret {
  flex: none;
  width: 0;
  height: 0;
  border: 4px solid transparent;
  border-top-color: #5f6368;
  border-bottom: 0;
}
.zoom {
  width: 65px;
  padding: 0 4px 0 11px;
}
.style {
  width: 105px;
  padding: 0 5px 0 12px;
}
.font {
  width: 104px;
  padding: 0 3px 0 12px;
}
.size-box {
  flex: none;
  display: flex;
  width: 90px;
  height: 24px;
  margin: 0 4px 0 6px;
  border: 1px solid #dadce0;
  border-radius: 2px;
}
.size-box button {
  width: 24px;
}
.size-box input {
  width: 40px;
  border: solid #dadce0;
  border-width: 0 1px;
  text-align: center;
}
.caret.near {
  margin: 0 4px 0 0;
}
.caret.list {
  margin: 0 6px 0 4px;
}
.mode {
  display: flex;
  align-items: center;
  margin-left: auto;
  margin-right: 4px;
  color: #444;
}
.mode-pick {
  width: 95px;
  margin: 0 6px;
}
.ruler-row {
  flex: none;
  display: flex;
  justify-content: center;
  height: 15px;
  padding-right: 41px;
  border: solid #dadce0;
  border-width: 1px 0;
  background: #e8eaed;
}
.ruler {
  position: relative;
  display: flex;
  width: 794px;
  border-right: 1px solid #c0c3c7;
}
.cell {
  flex: 1;
  background:
    linear-gradient(#b8bbbf, #b8bbbf) 0 50% / 1px 7px no-repeat,
    linear-gradient(#b8bbbf, #b8bbbf) 25% 50% / 1px 3px no-repeat,
    linear-gradient(#b8bbbf, #b8bbbf) 75% 50% / 1px 3px no-repeat;
  font-size: 10px;
  line-height: 13px;
  text-align: center;
  color: #444;
}
.cell.inner {
  background-color: #fff;
}
.cell.first {
  box-shadow: inset -19px 0 #fff;
}
.cell.last {
  box-shadow: inset 19px 0 #fff;
}
.indent-start,
.indent-end {
  position: absolute;
  top: 2px;
  left: 88px;
}
.indent-end {
  top: 7px;
  left: 694px;
}
.canvas-row {
  flex: 1;
  min-height: 0;
  display: flex;
}
.side-ruler {
  flex: none;
  width: 14px;
  overflow: hidden;
  display: flex;
  flex-direction: column;
  padding-top: 15px;
  border-right: 1px solid #dadce0;
  background: linear-gradient(#e8eaed 15px, #fff 15px);
}
.side-cell {
  flex: none;
  height: calc(794px / 21);
  display: flex;
  align-items: center;
  justify-content: center;
  padding-right: 2px;
  writing-mode: vertical-rl;
  transform: rotate(180deg);
  background:
    linear-gradient(#b8bbbf, #b8bbbf) 50% 100% / 7px 1px no-repeat,
    linear-gradient(#b8bbbf, #b8bbbf) 50% 25% / 3px 1px no-repeat,
    linear-gradient(#b8bbbf, #b8bbbf) 50% 75% / 3px 1px no-repeat;
  font-size: 10px;
  line-height: 11px;
  color: #444;
}
.side-cell.margin {
  background-color: #e8eaed;
}
.side-cell.half {
  box-shadow: inset 0 -19px #e8eaed;
}
.canvas {
  position: relative;
  flex: 1;
  min-width: 0;
  overflow: hidden;
  display: flex;
  justify-content: center;
  align-items: flex-start;
  padding: 15px 53px 0 0;
  background: #f8f9fa;
}
.outline-btn {
  position: absolute;
  left: 20px;
  top: 31px;
  color: #999b9e;
}
.page {
  width: 796px;
  min-height: 1123px;
  padding: 95px 96px 96px 119px;
  border: 1px solid #e6e8eb;
  background: #fff;
  color: #000;
  font: 15px/1.3 Lato, "Open Sans", sans-serif;
}
.page p {
  margin: 0;
  white-space: nowrap;
}
.heading {
  margin: 0 0 2lh -24px;
  text-align: center;
}
.cursor {
  display: inline-block;
  width: 2px;
  height: 20px;
  margin: 0 -2px -5px 0;
  vertical-align: baseline;
  background: #000;
}
.questions,
.subs {
  margin: 0;
  padding: 0;
  list-style: none;
}
.questions > li {
  display: flex;
  margin-bottom: 1lh;
}
.num {
  flex: none;
  width: 24px;
}
.subs > li {
  display: flex;
}
.subs > li > span {
  flex: none;
  width: 24px;
}
.wide > li > span {
  width: 28px;
}
.tight > li > span {
  width: 18px;
}
.inset {
  padding-left: 24px;
}
.page u {
  text-decoration: underline wavy #e02020 1px;
  text-underline-offset: 2px;
  text-decoration-skip-ink: none;
}
.scroll-thumb {
  position: absolute;
  right: 4px;
  top: 4px;
  width: 8px;
  height: 70%;
  border-radius: 4px;
  background: #dadce0;
}
.explore {
  position: absolute;
  right: 16px;
  bottom: 7px;
  width: 38px;
  height: 38px;
  border: 1px solid #d5d7da;
  border-radius: 3px;
  background: #fafafa;
  color: #6b6b6b;
}
.panel {
  flex: none;
  width: 56px;
  display: flex;
  flex-direction: column;
  align-items: center;
  border-left: 1px solid #dadce0;
}
.panel button {
  flex: none;
  width: 56px;
  height: 56px;
}
.panel-line {
  flex: none;
  width: 20px;
  height: 1px;
  margin: 16px 0;
  background: #dadce0;
}
.panel .grey {
  color: #80868b;
}
.panel .hide {
  margin-top: auto;
}

/* taskbar */
.taskbar {
  flex: none;
  height: 40px;
  display: flex;
  background: linear-gradient(90deg, #191d2e, #1b2733 38%, #1e2029 60%, #1c1c1c 85%);
  color: #fff;
}
.app {
  flex: none;
  width: 49px;
  height: 40px;
}
.app.opera {
  background: #47525c;
  border-bottom: 2px solid #9cc95a;
}
.app.discord {
  width: 41px;
  margin-left: 5px;
  border-bottom: 2px solid #9cc95a;
}
.tray {
  display: flex;
  align-items: center;
  gap: 8px;
  margin-left: auto;
}
.time {
  width: 68px;
  margin-right: 8px;
  display: flex;
  flex-direction: column;
  align-items: center;
  font: 11px/19px "Open Sans", "Noto Sans", sans-serif;
}
.peek {
  width: 1px;
  height: 40px;
  margin: 0 4px 0 10px;
  background: #6a6a6a;
}
</style>
